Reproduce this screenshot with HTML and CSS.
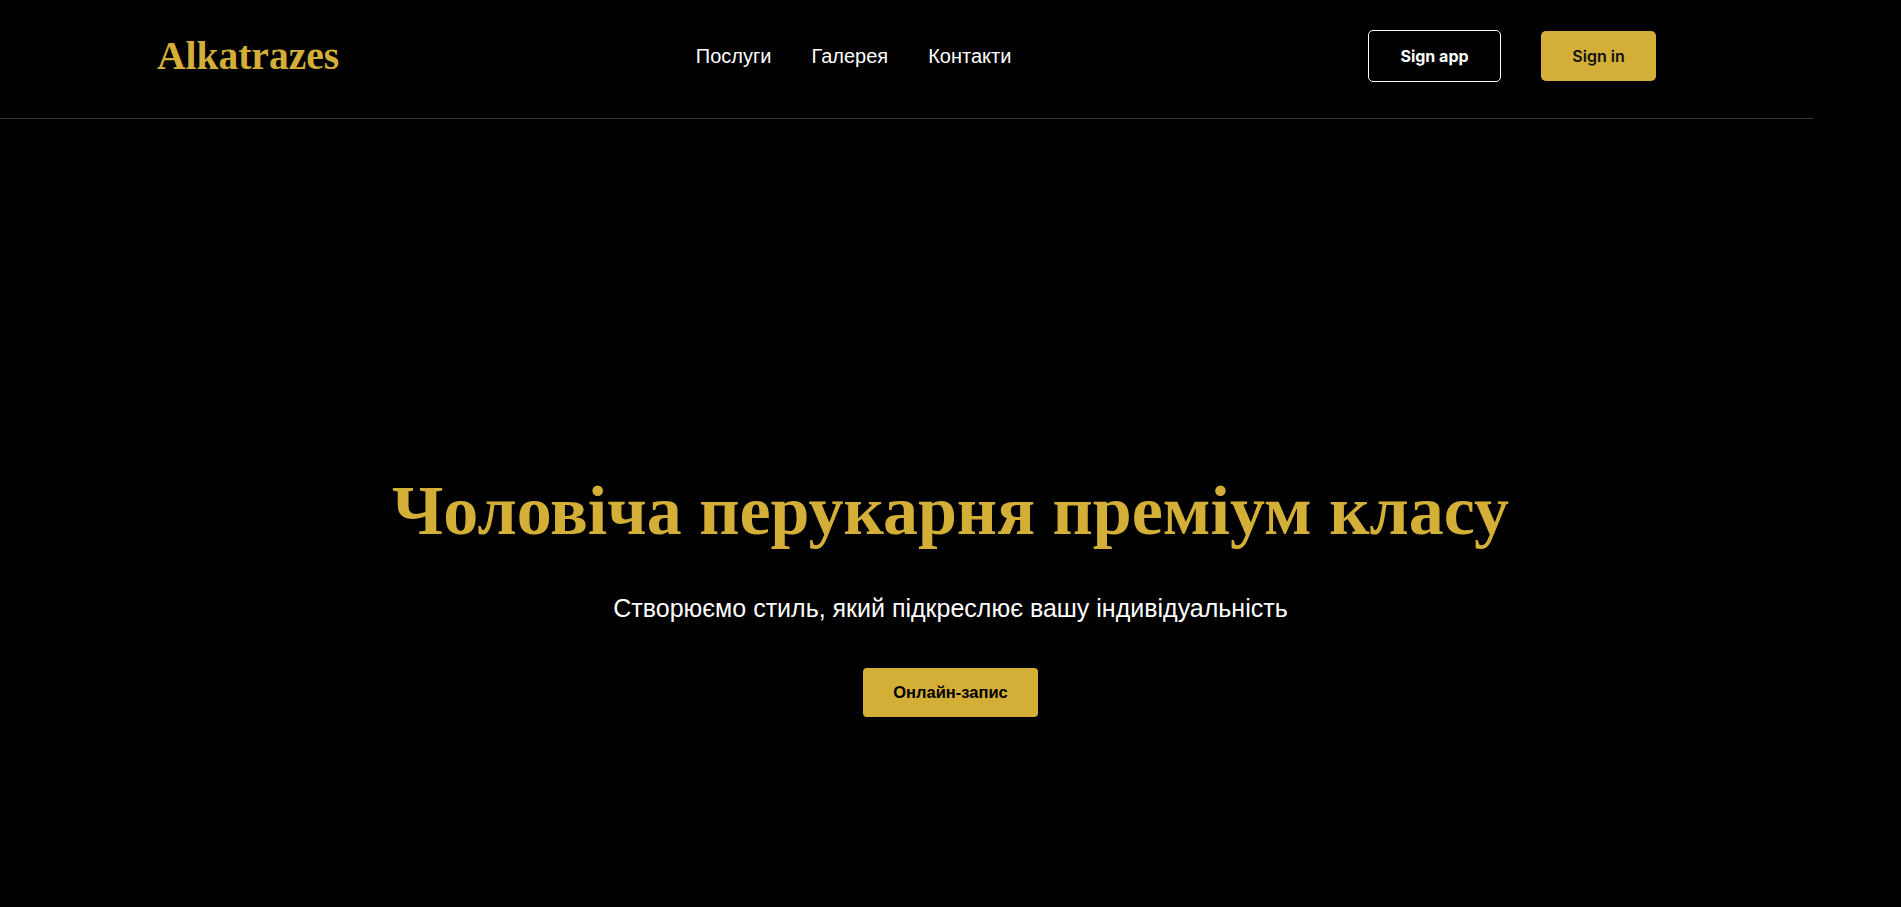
FILE: index.html
```html
<!DOCTYPE html>
<html lang="uk">
<head>
<meta charset="utf-8">
<title>Alkatrazes</title>
<link rel="stylesheet" href="styles.css">
</head>
<body>
<header class="header">
  <a class="logo" href="#">Alkatrazes</a>
  <nav class="nav">
    <a href="#">Послуги</a>
    <a href="#">Галерея</a>
    <a href="#">Контакти</a>
  </nav>
  <div class="actions">
    <a class="btn btn-outline" href="#">Sign app</a>
    <a class="btn btn-gold" href="#">Sign in</a>
  </div>
</header>
<main class="hero">
  <h1 class="hero-title">Чоловіча перукарня преміум класу</h1>
  <p class="hero-sub">Створюємо стиль, який підкреслює вашу індивідуальність</p>
  <a class="hero-btn" href="#">Онлайн-запис</a>
</main>
</body>
</html>
```
FILE: styles.css
```css
* { box-sizing: border-box; }
html, body {
  margin: 0;
  padding: 0;
  background: #000;
  height: 100%;
}
body {
  font-family: "Liberation Sans", Arial, sans-serif;
  color: #fff;
  overflow: hidden;
}
a { text-decoration: none; }

.header {
  width: 1813px;
  display: flex;
  align-items: center;
  justify-content: space-between;
  padding: 30px 157px 36px;
  border-bottom: 1px solid #3a3a3a;
}
.logo {
  font-family: "Liberation Serif", "Times New Roman", serif;
  font-weight: 700;
  font-size: 39.5px;
  line-height: 52px;
  color: #d4af37;
}
.nav {
  display: flex;
  gap: 40px;
}
.nav a {
  color: #fff;
  font-size: 20px;
  line-height: 24px;
}
.actions {
  display: flex;
  align-items: center;
  gap: 40px;
}
.btn {
  display: flex;
  align-items: center;
  justify-content: center;
  font-family: Inter, "Liberation Sans", sans-serif;
  font-size: 16px;
  border-radius: 5px;
}
.btn-outline {
  height: 52px;
  width: 133px;
  border: 1px solid #fff;
  color: #fff;
  font-weight: 700;
}
.btn-gold {
  height: 50px;
  width: 115px;
  background: #d4af37;
  color: #111;
  font-weight: 600;
}

.hero {
  display: flex;
  flex-direction: column;
  align-items: center;
  padding-top: 350px;
}
.hero-title {
  margin: 0;
  font-family: "Liberation Serif", "Times New Roman", serif;
  font-weight: 700;
  font-size: 70px;
  line-height: 84px;
  color: #d4af37;
}
.hero-sub {
  margin: 40px 0 0;
  font-size: 25px;
  line-height: 30px;
  color: #fff;
}
.hero-btn {
  margin-top: 45px;
  height: 49px;
  padding: 0 30px;
  display: flex;
  align-items: center;
  background: #d4af37;
  color: #000;
  font-weight: 700;
  font-size: 16.5px;
  border-radius: 4px;
}
```
